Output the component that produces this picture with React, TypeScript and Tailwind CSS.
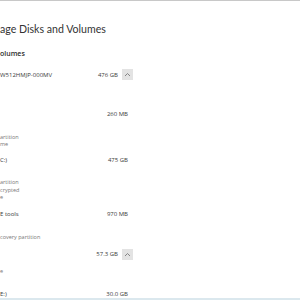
import React from "react";

const font = { fontFamily: '"Open Sans", "Noto Sans", sans-serif' };

function ChevronBox() {
  return (
    <div className="ml-[4px] flex h-[11px] w-[11px] items-center justify-center bg-[#e3e3e3]">
      <svg width="7" height="5" viewBox="0 0 7 5" fill="none">
        <polyline points="1,4 3.5,1.5 6,4" stroke="#7a7a7a" strokeWidth="0.9" />
      </svg>
    </div>
  );
}

function Sub({ children }: { children?: React.ReactNode }) {
  return <div className="h-[7.5px] text-[5.5px] leading-[7.5px] text-[#777] whitespace-nowrap">{children}</div>;
}

function VolRow({ name, size }: { name: string; size: string }) {
  return (
    <div className="flex h-[8px] items-center justify-between pr-[5px] text-[6px] leading-[8px] text-[#3a3a3a]">
      <span className="whitespace-nowrap">{name}</span>
      <span className="whitespace-nowrap">{size}</span>
    </div>
  );
}

function DiskRow({ name, size }: { name: string; size: string }) {
  return (
    <div className="flex h-[11px] items-center justify-between text-[6px] leading-[8px] text-[#3a3a3a]">
      <span className="whitespace-nowrap">{name}</span>
      <div className="flex items-center">
        <span className="whitespace-nowrap">{size}</span>
        <ChevronBox />
      </div>
    </div>
  );
}

export default function App() {
  return (
    <div className="flex h-[300px] w-[300px] flex-col overflow-hidden bg-white" style={font}>
      <div className="h-[1px] bg-[#c8c8c8]" />
      <div className="flex-1 overflow-hidden">
        <div className="w-[133px]">
          <div
            className="mt-[21px] h-[14px] text-[10.6px] leading-[14px] text-[#333] whitespace-nowrap"
            style={{ fontFamily: 'Lato, "Open Sans", sans-serif' }}
          >
            age Disks and Volumes
          </div>
          <div className="mt-[13px] h-[10px] text-[7px] leading-[10px] font-semibold text-[#2a2a2a]">olumes</div>
          <div className="mt-[10px]">
            <DiskRow name="W512HMJP-000MV" size="476 GB" />
          </div>
          <div className="mt-[30px]">
            <VolRow name="" size="260 MB" />
          </div>
          <div className="mt-[8px]">
            <Sub />
            <Sub>artition</Sub>
            <Sub>me</Sub>
          </div>
          <div className="mt-[7px]">
            <VolRow name="C:)" size="475 GB" />
          </div>
          <div className="mt-[8px]">
            <Sub />
            <Sub>artition</Sub>
            <Sub>crypted</Sub>
            <Sub>e</Sub>
          </div>
          <div className="mt-[8.5px]">
            <VolRow name="E tools" size="970 MB" />
          </div>
          <div className="mt-[8px]">
            <Sub />
            <Sub>covery partition</Sub>
          </div>
          <div className="mt-[7.5px]">
            <DiskRow name="" size="57.3 GB" />
          </div>
          <div className="mt-[8.5px]">
            <Sub>e</Sub>
          </div>
          <div className="mt-[14px]">
            <VolRow name="E:)" size="30.0 GB" />
          </div>
        </div>
      </div>
      <div className="h-[2px] bg-[#dbe8ee]" />
    </div>
  );
}
